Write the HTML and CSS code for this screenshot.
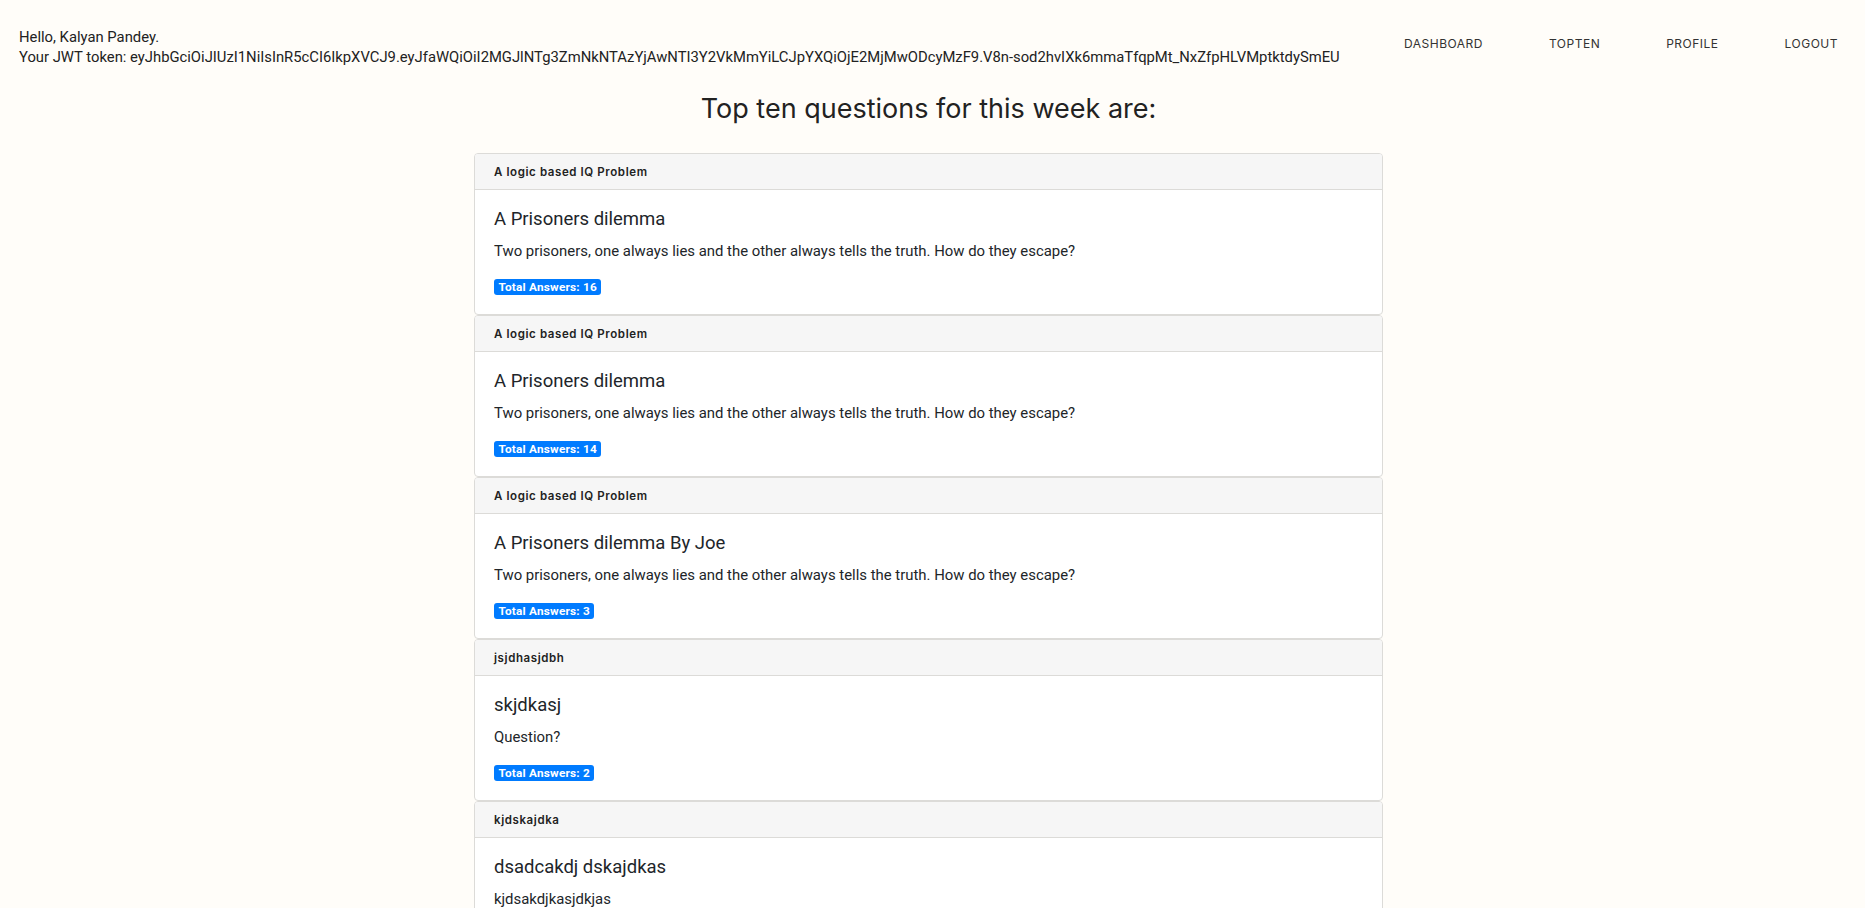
FILE: index.html
```html
<!DOCTYPE html>
<html lang="en">
<head>
<meta charset="utf-8">
<title>Top Ten</title>
<link rel="stylesheet" href="styles.css">
</head>
<body>
<header class="topbar">
  <div class="greeting">
    <div class="line">Hello, Kalyan Pandey.</div>
    <div class="line">Your JWT token: eyJhbGciOiJIUzI1NiIsInR5cCI6IkpXVCJ9.eyJfaWQiOiI2MGJlNTg3ZmNkNTAzYjAwNTI3Y2VkMmYiLCJpYXQiOjE2MjMwODcyMzF9.V8n-sod2hvIXk6mmaTfqpMt_NxZfpHLVMptktdySmEU</div>
  </div>
  <nav class="nav">
    <a class="nav-link" href="#">DASHBOARD</a>
    <a class="nav-link" href="#">TOPTEN</a>
    <a class="nav-link" href="#">PROFILE</a>
    <a class="nav-link" href="#">LOGOUT</a>
  </nav>
</header>
<main class="main">
  <h1 class="page-title">Top ten questions for this week are:</h1>
  <div class="cards">
    <div class="card">
      <div class="card-header">A logic based IQ Problem</div>
      <div class="card-body">
        <h5 class="card-title">A Prisoners dilemma</h5>
        <p class="card-text">Two prisoners, one always lies and the other always tells the truth. How do they escape?</p>
        <span class="badge">Total Answers: 16</span>
      </div>
    </div>
    <div class="card">
      <div class="card-header">A logic based IQ Problem</div>
      <div class="card-body">
        <h5 class="card-title">A Prisoners dilemma</h5>
        <p class="card-text">Two prisoners, one always lies and the other always tells the truth. How do they escape?</p>
        <span class="badge">Total Answers: 14</span>
      </div>
    </div>
    <div class="card">
      <div class="card-header">A logic based IQ Problem</div>
      <div class="card-body">
        <h5 class="card-title">A Prisoners dilemma By Joe</h5>
        <p class="card-text">Two prisoners, one always lies and the other always tells the truth. How do they escape?</p>
        <span class="badge">Total Answers: 3</span>
      </div>
    </div>
    <div class="card">
      <div class="card-header">jsjdhasjdbh</div>
      <div class="card-body">
        <h5 class="card-title">skjdkasj</h5>
        <p class="card-text">Question?</p>
        <span class="badge">Total Answers: 2</span>
      </div>
    </div>
    <div class="card">
      <div class="card-header">kjdskajdka</div>
      <div class="card-body">
        <h5 class="card-title">dsadcakdj dskajdkas</h5>
        <p class="card-text">kjdsakdjkasjdkjas</p>
        <span class="badge">Total Answers: 1</span>
      </div>
    </div>
  </div>
</main>
</body>
</html>
```
FILE: styles.css
```css
html, body {
  margin: 0;
  padding: 0;
}
body {
  background: #fffdf9;
  color: #212529;
  font-family: Roboto, "Liberation Sans", Arial, sans-serif;
  font-size: 14px;
}
.topbar {
  display: flex;
  justify-content: space-between;
  align-items: flex-start;
  padding: 27px 27px 0 19px;
}
.greeting .line {
  line-height: 20px;
  font-size: 14.8px;
  color: #222;
}
.nav {
  display: flex;
  gap: 66px;
  margin-top: 9px;
}
.nav-link {
  font-family: Inter, "Open Sans", sans-serif;
  font-size: 12px;
  line-height: 16px;
  letter-spacing: 0.5px;
  color: #333;
  text-decoration: none;
}
.main {
  padding-right: 8px;
}
.page-title {
  margin: 26px 0 28px;
  text-align: center;
  font-family: Inter, "Open Sans", sans-serif;
  font-weight: 400;
  font-size: 27px;
  line-height: 32px;
  color: #222;
  letter-spacing: 0;
}
.cards {
  width: 909px;
  margin: 0 auto;
  display: flex;
  flex-direction: column;
}
.card {
  border: 1px solid #dcdbd8;
  border-radius: 4px;
  background: #fff;
  overflow: hidden;
}
.card-header {
  background: #f6f6f6;
  border-bottom: 1px solid #dcdbd8;
  padding: 9px 19px 7px;
  line-height: 19px;
  font-family: Inter, "Open Sans", sans-serif;
  font-size: 11.5px;
  font-weight: 600;
  letter-spacing: 0.6px;
  color: #222;
}
.card-body {
  padding: 18px 19px 19px;
}
.card-title {
  margin: 0 0 9px;
  font-size: 18.5px;
  font-weight: 400;
  line-height: 22px;
  color: #212529;
}
.card-text {
  margin: 0 0 16px;
  font-size: 14.9px;
  line-height: 24px;
}
.badge {
  display: block;
  width: max-content;
  background: #007bff;
  color: #fff;
  font-size: 11.8px;
  font-weight: 700;
  line-height: 16px;
  padding: 0 4.5px;
  border-radius: 3px;
  letter-spacing: 0.2px;
}
```
